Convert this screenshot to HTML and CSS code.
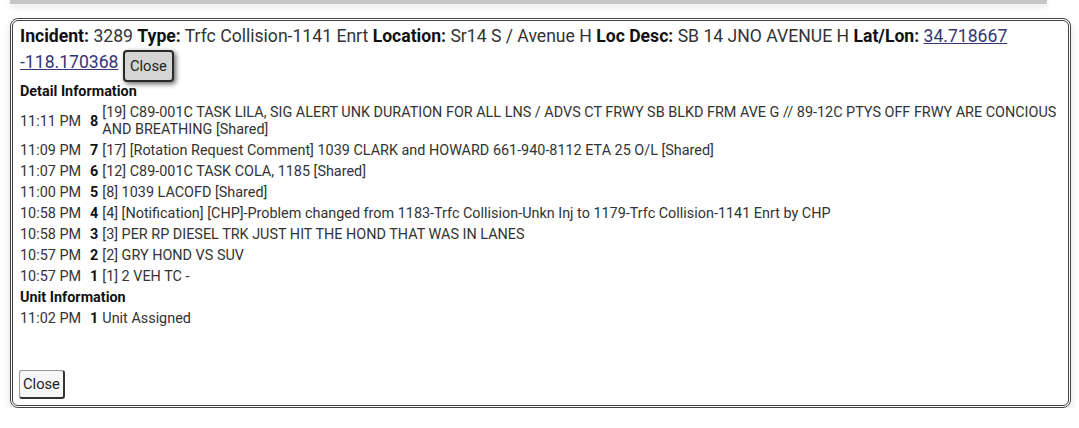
FILE: index.html
```html
<!DOCTYPE html>
<html>
<head>
<meta charset="utf-8">
<link rel="stylesheet" href="styles.css">
</head>
<body>
<div class="prev"></div>
<div class="dialog">
  <div class="head">
    <b>Incident:</b> 3289 <b>Type:</b> Trfc Collision-1141 Enrt <b>Location:</b> Sr14 S / Avenue H <b>Loc Desc:</b> SB 14 JNO AVENUE H <b>Lat/Lon:</b> <a href="#" class="ll">34.718667 -118.170368</a> <button class="btn-top">Close</button>
  </div>
  <div class="body">
    <table class="log">
      <tr><th colspan="3">Detail Information</th></tr>
      <tr><td class="t">11:11 PM</td><td class="n">8</td><td>[19] C89-001C TASK LILA, SIG ALERT UNK DURATION FOR ALL LNS / ADVS CT FRWY SB BLKD FRM AVE G // 89-12C PTYS OFF FRWY ARE CONCIOUS AND BREATHING [Shared]</td></tr>
      <tr><td class="t">11:09 PM</td><td class="n">7</td><td>[17] [Rotation Request Comment] 1039 CLARK and HOWARD 661-940-8112 ETA 25 O/L [Shared]</td></tr>
      <tr><td class="t">11:07 PM</td><td class="n">6</td><td>[12] C89-001C TASK COLA, 1185 [Shared]</td></tr>
      <tr><td class="t">11:00 PM</td><td class="n">5</td><td>[8] 1039 LACOFD [Shared]</td></tr>
      <tr><td class="t">10:58 PM</td><td class="n">4</td><td>[4] [Notification] [CHP]-Problem changed from 1183-Trfc Collision-Unkn Inj to 1179-Trfc Collision-1141 Enrt by CHP</td></tr>
      <tr><td class="t">10:58 PM</td><td class="n">3</td><td>[3] PER RP DIESEL TRK JUST HIT THE HOND THAT WAS IN LANES</td></tr>
      <tr><td class="t">10:57 PM</td><td class="n">2</td><td>[2] GRY HOND VS SUV</td></tr>
      <tr><td class="t">10:57 PM</td><td class="n">1</td><td>[1] 2 VEH TC -</td></tr>
      <tr><th colspan="3">Unit Information</th></tr>
      <tr><td class="t">11:02 PM</td><td class="n">1</td><td>Unit Assigned</td></tr>
    </table>
  </div>
  <div class="foot"><button class="btn-bottom">Close</button></div>
</div>
</body>
</html>
```
FILE: styles.css
```css
html, body { margin: 0; padding: 0; background: #fff; }
body { font-family: Roboto, "Liberation Sans", sans-serif; color: #333; }
.prev {
  height: 4px;
  margin: 0 32px 0 10px;
  background: #c6c6c6;
  box-shadow: 0 3px 6px rgba(0,0,0,0.12);
}
.dialog {
  margin: 14px 8px 0 10px;
  height: 384px;
  border: 3px double #444;
  border-radius: 8px;
  box-shadow: 0 4px 8px rgba(0,0,0,0.12);
  display: flex;
  flex-direction: column;
  box-sizing: content-box;
  padding: 0 4px 0 4px;
}
.head {
  font-size: 17.6px;
  line-height: 26px;
  padding: 2px 0 0 3px;
  color: #333;
}
.head b { color: #111; }
.ll { color: #353578; text-decoration: underline; }
.btn-top {
  font-family: Roboto, "Liberation Sans", sans-serif;
  font-size: 14.7px;
  color: #222;
  background: #d4d4d4;
  border: 2px solid #2a2a2a;
  border-radius: 4px;
  padding: 5px 5px;
  box-shadow: 2px 2px 5px rgba(0,0,0,0.6);
  vertical-align: -3px;
  margin-left: 0;
}
.body { flex: 1; margin-top: -2px; }
.log { border-collapse: separate; border-spacing: 2px; font-size: 14.4px; line-height: 17px; color: #333; }
.log th { text-align: left; font-weight: bold; color: #111; padding: 1px; }
.log td { padding: 1px; vertical-align: middle; }
.log td.t { white-space: nowrap; padding-right: 6px; }
.log td.n { font-weight: bold; color: #111; }
.foot { padding: 0 0 6px 2px; }
.btn-bottom {
  font-family: Roboto, "Liberation Sans", sans-serif;
  font-size: 14.7px;
  color: #222;
  background: #f7f7f7;
  border: 1px solid #999;
  border-right: 2px solid #333;
  border-bottom: 2px solid #333;
  border-radius: 3px;
  padding: 4px 3px;
}
```
